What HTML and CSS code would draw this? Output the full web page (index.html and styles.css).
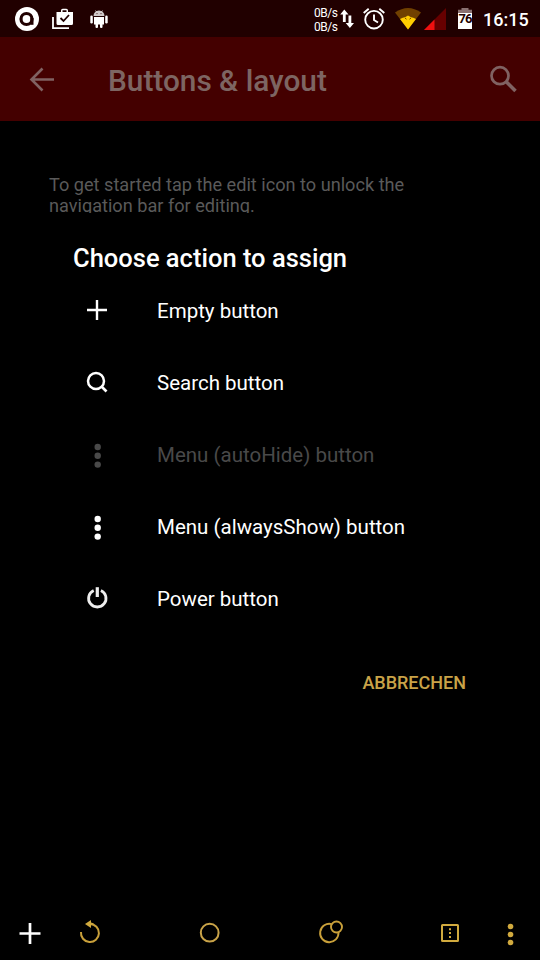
FILE: index.html
```
<!DOCTYPE html>
<html lang="en">
<head>
<meta charset="utf-8">
<title>Buttons &amp; layout</title>
<link rel="stylesheet" href="styles.css">
</head>
<body>
<div class="screen">
  <header class="status">
    <div class="notices">
      <svg width="24" height="24" viewBox="15 6.5 24 24"><circle cx="27" cy="18.5" r="12" fill="#fff"/><circle cx="26.5" cy="18.5" r="5.5" fill="none" stroke="#210000" stroke-width="3.2"/><path d="M32 17.5v6.8" stroke="#210000" stroke-width="3"/></svg>
      <svg width="22" height="22" viewBox="52 8 22 22"><path d="M53 17v11.2h16" fill="none" stroke="#fff" stroke-width="1.8"/><path fill="#fff" fill-rule="evenodd" d="M56.5 12H61v-1.5q0-1.7 1.7-1.7h3.6q1.7 0 1.7 1.7V12h5v11.5q0 1.5-1.5 1.5h-13.500q-1.500 0-1.500-1.500zM62.500 12h4v-1.800h-4z"/><path d="M60.500 18l3 3 5.500-6" fill="none" stroke="#210000" stroke-width="1.800"/></svg>
      <svg width="18" height="18" viewBox="90 9 18 18"><g fill="#fff"><path opacity=".78" d="M93.500 15a5.500 5.500 0 0 1 11 0z"/><path d="M94 16h10v7.500h-10z"/><rect x="90.300" y="14.500" width="2.500" height="8" rx="1.200"/><rect x="105.200" y="14.500" width="2.500" height="8" rx="1.200"/><rect x="95.500" y="21" width="2.500" height="6" rx="1.100"/><rect x="100" y="21" width="2.500" height="6" rx="1.100"/></g><path d="M95.500 9.500l1.500 2M102.500 9.500l-1.500 2" stroke="#eee" stroke-width=".7"/><circle cx="97" cy="12.600" r=".7" fill="#533"/><circle cx="101" cy="12.600" r=".7" fill="#533"/></svg>
    </div>
    <div class="indicators">
      <div class="rates"><span>0B/s</span><span>0B/s</span></div>
      <svg class="arrows" width="14" height="20" viewBox="340 9 14 20"><path fill="#fff" d="M344.300 9.500l4.200 5h-2.800V22h-2.800v-7.500h-2.700zM348.500 15.500h2.800V23h2.700l-4.100 5-4.200-5h2.800z"/></svg>
      <svg class="alarm" width="22" height="22" viewBox="363 8 22 22"><g fill="none" stroke="#fff" stroke-width="1.900"><circle cx="374" cy="19.700" r="8.800"/><path d="M374 14.500v5.500l4 2.500M363.700 13l5-4.200M384.300 13l-5-4.200"/></g></svg>
      <svg class="wifi" width="26" height="22" viewBox="395 8 26 22"><path fill="#704000" d="M395 12.500Q408 3.500 421 12.500L408 29.500z"/><path fill="#fc0" d="M400 19q3-1.500 5-1.800l3-1.700 3 1.700q2 .3 5 1.800l-8 10.500z"/><path d="M405 18l1.500 1.200M411 18l-1.500 1.200" stroke="#704000"/></svg>
      <svg class="signal" width="22" height="22" viewBox="424 7 22 22"><path fill="#670000" d="M446 7v22h-22z"/><path fill="#f01010" d="M434.500 18.500V29H424z"/></svg>
      <div class="battery">76</div>
      <div class="clock">16:15</div>
    </div>
  </header>
  <div class="toolbar">
    <svg width="26" height="26" viewBox="29 66 26 26"><path d="M54 79.500H31.500M42.500 68.500l-11 11 11 11" fill="none" stroke="#806262" stroke-width="2.600"/></svg>
    <h1>Buttons &amp; layout</h1>
    <svg class="find" width="28" height="28" viewBox="489 65 28 28"><circle cx="500" cy="75.700" r="8.500" fill="none" stroke="#806262" stroke-width="2.700"/><path d="M506 81.500l9.500 9.500" stroke="#806262" stroke-width="3.500"/></svg>
  </div>
  <p class="intro">To get started tap the edit icon to unlock the<br>navigation bar for editing.</p>
  <main class="dialog">
    <h2>Choose action to assign</h2>
    <ul>
      <li><svg viewBox="0 0 24 24"><path d="M12 2v20M2 12h20" stroke="#fff" stroke-width="2.400"/></svg><span>Empty button</span></li>
      <li><svg viewBox="0 0 24 24"><circle cx="11" cy="11" r="8" fill="none" stroke="#fff" stroke-width="2.500"/><path d="M16.500 16.500l5 5" stroke="#fff" stroke-width="2.700"/></svg><span>Search button</span></li>
      <li class="disabled"><svg viewBox="0 0 24 24" fill="#494949"><circle cx="12.700" cy="5" r="3.200"/><circle cx="12.700" cy="13.800" r="3.200"/><circle cx="12.700" cy="22.600" r="3.200"/></svg><span>Menu (autoHide) button</span></li>
      <li><svg viewBox="0 0 24 24" fill="#fff"><circle cx="12.700" cy="5" r="3.200"/><circle cx="12.700" cy="13.800" r="3.200"/><circle cx="12.700" cy="22.600" r="3.200"/></svg><span>Menu (alwaysShow) button</span></li>
      <li><svg viewBox="0 0 24 24" fill="none" stroke="#eee"><path d="M8.700 4.400a8.700 8.700 0 1 0 7.200 0" stroke-width="2.800"/><path d="M12.300 1.200v9.800" stroke-width="3.200"/></svg><span>Power button</span></li>
    </ul>
    <div class="actions"><button type="button">ABBRECHEN</button></div>
  </main>
  <nav>
    <svg class="add" width="24" height="24" viewBox="18 921 24 24"><path d="M30 923v21M19.500 933.500h21" stroke="#fff" stroke-width="2.700"/></svg>
    <svg class="back" width="24" height="24" viewBox="78 921 24 24"><path d="M81 932a9 9 0 1 0 9-8" fill="none" stroke="#c9a03a" stroke-width="2"/><path d="M85 924l6-4v2.500l3 1-3 1.500v3z" fill="#d1aa3e"/></svg>
    <svg class="home" width="24" height="24" viewBox="198 921 24 24"><circle cx="209.700" cy="932.700" r="8.900" fill="none" stroke="#c9a348" stroke-width="2"/></svg>
    <svg class="recent" width="26" height="24" viewBox="318 921 26 24"><g fill="none" stroke="#c9a03a" stroke-width="1.900"><path d="M331.700 924.100a9.200 9.200 0 1 0 6.800 8.300"/><circle cx="336.500" cy="927" r="5.500"/></g></svg>
    <svg class="option" width="24" height="24" viewBox="438 921 24 24"><rect x="442" y="925" width="16" height="16" rx=".5" fill="none" stroke="#d1aa3e" stroke-width="2"/><path d="M449 928.300h2v2h-2zm0 3.800h2v2h-2zm0 3.800h2v2h-2z" fill="#d1aa3e"/></svg>
    <svg class="more" width="24" height="24" viewBox="498 921 24 24" fill="#d1aa3e"><circle cx="510.500" cy="926.500" r="2.800"/><circle cx="510.500" cy="934.500" r="2.800"/><circle cx="510.500" cy="942.500" r="2.800"/></svg>
  </nav>
</div>
</body>
</html>
```
FILE: styles.css
```
* { box-sizing: border-box; }
body { margin: 0; background: #000; color: #fff; font-family: Roboto, sans-serif; }
svg { display: block; flex: none; overflow: visible; }
h1, h2, p, ul { margin: 0; padding: 0; }
h1, h2, p, span, button, .clock { white-space: nowrap; }
.screen { width: 540px; height: 960px; display: flex; flex-direction: column; overflow: hidden; background: #000; }
.status { height: 37px; flex: none; display: flex; justify-content: space-between; background: #210000; padding: 0 12px 0 15px; }
.notices, .indicators { display: flex; align-items: center; }
.notices { gap: 13px; }
.notices svg:last-child { margin-left: 3px; }
.rates { display: flex; flex-direction: column; width: 26px; font: 12px/14px Roboto, sans-serif; letter-spacing: -.5px; padding-top: 2px; }
.alarm { margin-left: 9px; }
.wifi { margin-left: 10px; }
.signal { margin-left: 3px; }
.battery { width: 14px; height: 21px; margin: 0 11px 0 12px; background: linear-gradient(#8a7070 0 5px, #fff 5px); clip-path: polygon(25% 0, 75% 0, 75% 8%, 100% 8%, 100% 100%, 0 100%, 0 8%, 25% 8%); color: #210000; font-size: 13px; font-weight: 700; line-height: 22px; text-align: center; letter-spacing: -.9px; }
.clock { width: 45px; font-size: 18px; font-weight: 500; line-height: 37px; padding-top: 2px; }
.toolbar { height: 84px; flex: none; display: flex; align-items: center; padding: 0 23px 0 29px; background: #440000; }
h1 { margin-left: 53px; font-size: 29.8px; font-weight: 500; line-height: 34px; color: #7d6562; padding-top: 3px; }
.find { margin-left: auto; }
.intro { height: 92px; flex: none; padding: 53px 49px 0; font-size: 18.15px; line-height: 21px; color: #5a5a5a; overflow: hidden; }
.dialog { padding: 30px 73px 0; height: 687px; flex: none; }
h2 { font-size: 25.5px; font-weight: 500; line-height: 31px; }
ul { list-style: none; }
li { height: 72px; display: flex; align-items: center; font-size: 20.5px; line-height: 28px; padding-left: 12px; }
li svg { width: 24px; height: 24px; margin-right: 48px; }
li span { padding-top: 1px; }
.disabled { color: #494949; }
.actions { display: flex; justify-content: flex-end; padding: 35px 1px 0 0; }
button { border: 0; padding: 0; background: transparent; color: #c9a348; font: 500 18px/28px Roboto, sans-serif; }
nav { height: 60px; flex: none; display: flex; padding: 21px 0 0 18px; }
.back, .more { margin-left: 36px; }
.home, .recent { margin-left: 96px; }
.option { margin-left: 94px; }
```
